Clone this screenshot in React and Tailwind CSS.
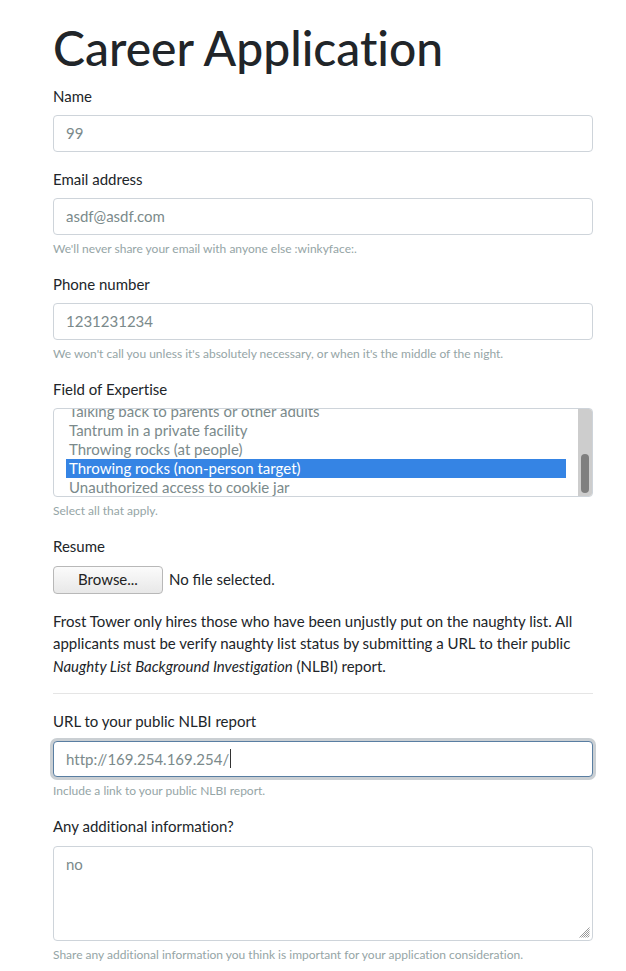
import React from "react";

const font = { fontFamily: "Lato, 'Open Sans', sans-serif" };

function Label({ children }) {
  return <label className="block mb-2 text-[15px] leading-[1.5] text-[#212529]">{children}</label>;
}

function Help({ children }) {
  return <small className="block mt-[5px] -mb-px text-[12px] leading-[1.5] text-[#95a5a6]">{children}</small>;
}

function Input({ value, focused }) {
  return (
    <div
      className={`h-[36.5px] px-3 py-[6px] rounded text-[15px] leading-[1.5] text-[#7b8a8b] bg-white border flex items-center ${
        focused ? "border-[#597ea2] shadow-[0_0_0_3px_rgba(44,62,80,0.25)]" : "border-[#ced4da]"
      }`}
    >
      <span>{value}</span>
      {focused && <span className="inline-block w-px h-[19px] bg-[#333] ml-px" />}
    </div>
  );
}

const options = [
  "Talking back to parents or other adults",
  "Tantrum in a private facility",
  "Throwing rocks (at people)",
  "Throwing rocks (non-person target)",
  "Unauthorized access to cookie jar",
];

export default function App() {
  return (
    <div className="min-h-screen bg-white [font-variant-ligatures:none]" style={font}>
      <div className="ml-[53px] w-[540px] pt-[19px] pb-4">
        <h1 className="text-[48px] leading-[1.2] font-medium text-[#212529] mb-2">Career Application</h1>

        <div className="mb-4">
          <Label>Name</Label>
          <Input value="99" />
        </div>

        <div className="mb-4">
          <Label>Email address</Label>
          <Input value="asdf@asdf.com" />
          <Help>We'll never share your email with anyone else :winkyface:.</Help>
        </div>

        <div className="mb-4">
          <Label>Phone number</Label>
          <Input value="1231231234" />
          <Help>We won't call you unless it's absolutely necessary, or when it's the middle of the night.</Help>
        </div>

        <div className="mb-4">
          <Label>Field of Expertise</Label>
          <div className="h-[89px] border border-[#ced4da] rounded flex overflow-hidden bg-white">
            <div className="flex-1 pl-3 pr-3 overflow-hidden">
              <div className="-mt-[7px]">
                {options.map((o, i) => (
                  <div
                    key={o}
                    className={`h-[19px] px-[3px] text-[15px] leading-[19px] whitespace-nowrap ${
                      i === 3 ? "bg-[#3584e4] text-white" : "text-[#7b8a8b]"
                    }`}
                  >
                    {o}
                  </div>
                ))}
              </div>
            </div>
            <div className="w-[14px] bg-[#cdcdcd] flex flex-col justify-end items-center pb-[3px]">
              <div className="w-[8px] h-[39px] rounded-full bg-[#7f7f7f]" />
            </div>
          </div>
          <Help>Select all that apply.</Help>
        </div>

        <div className="mb-4">
          <Label>Resume</Label>
          <div className="flex items-center gap-[6px] text-[15px] text-[#212529]">
            <button className="w-[110px] h-[28px] rounded border border-[#b8b8b8] bg-gradient-to-b from-[#fbfbfb] to-[#e8e8e8] text-[15px] text-[#222]">
              Browse...
            </button>
            <span className="[font-variant-ligatures:normal]">No file selected.</span>
          </div>
        </div>

        <p className="text-[15px] leading-[1.5] text-[#212529] mb-4">
          Frost Tower only hires those who have been unjustly put on the naughty list. All applicants must be verify
          naughty list status by submitting a URL to their public <em>Naughty List Background Investigation</em> (NLBI)
          report.
        </p>

        <hr className="border-0 border-t border-[rgba(0,0,0,0.1)] my-4" />

        <div className="mb-4">
          <Label>URL to your public NLBI report</Label>
          <Input value="http://169.254.169.254/" focused />
          <Help>Include a link to your public NLBI report.</Help>
        </div>

        <div className="mb-4">
          <Label>Any additional information?</Label>
          <div className="relative h-[95px] border border-[#ced4da] rounded px-3 py-[6px] text-[15px] leading-[1.5] text-[#7b8a8b] bg-white">
            no
            <svg className="absolute right-[2px] bottom-[2px]" width="11" height="11" viewBox="0 0 11 11">
              <path
                d="M10.5 0.5 L0.5 10.5 M10.5 2.5 L2.5 10.5 M10.5 4.5 L4.5 10.5 M10.5 6.5 L6.5 10.5 M10.5 8.5 L8.5 10.5"
                stroke="#9a9a9a"
                strokeWidth="1"
              />
            </svg>
          </div>
          <Help>Share any additional information you think is important for your application consideration.</Help>
        </div>
      </div>
    </div>
  );
}
